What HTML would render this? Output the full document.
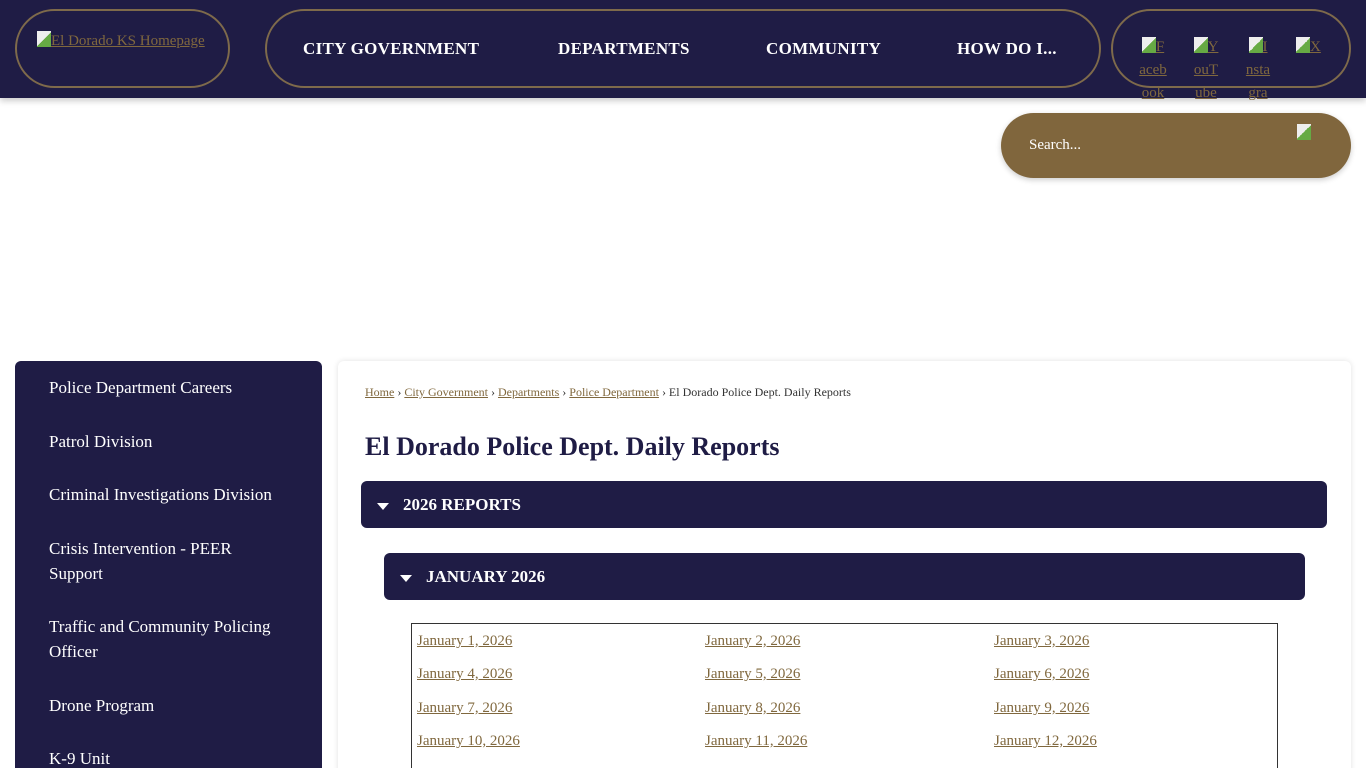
<!DOCTYPE html>
<html><head><meta charset="utf-8"><style>
html,body{margin:0;width:1366px;height:768px;overflow:hidden}
body{background:#fff;position:relative}
*{font-family:"Liberation Serif","DejaVu Serif",serif}
.hdr{position:absolute;left:0;top:0;width:1366px;height:98px;background:#1f1c45;box-shadow:0 3px 6px rgba(0,0,0,.2)}
.pill{position:absolute;border:2px solid #7e6a4b;border-radius:40px;box-sizing:border-box}
a{color:#80683e;text-decoration:underline}
.nav{color:#fff;font-weight:bold;font-size:17px;position:absolute;top:39px;letter-spacing:.3px}
.soc{position:absolute;top:36px;font-size:15px;color:#80683e;text-decoration:underline;width:30px;line-height:23px;word-break:break-all;text-align:center}
.search{position:absolute;left:1001px;top:113px;width:350px;height:65px;background:#80663d;border-radius:33px;box-shadow:0 2px 6px rgba(0,0,0,.2)}
.side{position:absolute;left:15px;top:361px;width:307px;height:420px;background:#1f1c45;border-radius:6px}
.side div{position:absolute;left:34px;color:#fff;font-size:17px;line-height:25px;width:240px}
.main{position:absolute;left:338px;top:361px;width:1013px;height:420px;background:#fff;border-radius:6px;box-shadow:0 0 6px rgba(0,0,0,.12)}
.bar{position:absolute;background:#1f1c45;border-radius:6px;color:#fff;font-weight:bold;font-size:17px}
.tri{display:inline-block;width:0;height:0;border-left:6px solid transparent;border-right:6px solid transparent;border-top:7px solid #fff;margin-right:14px;vertical-align:middle}
.cal{position:absolute;left:411px;top:623px;width:867px;height:160px;border:1px solid #333;box-sizing:border-box}
.cal a{position:absolute;font-size:15px}
.ic{display:inline-block;width:14px;height:16px;background:linear-gradient(135deg,#eee 50%,#6a4 50%);vertical-align:-2px}
</style></head><body>
<div class="hdr">
<div class="pill" style="left:15px;top:9px;width:215px;height:79px"></div>
<a style="position:absolute;left:37px;top:31px;font-size:15px"><span class="ic"></span>El Dorado KS Homepage</a>
<div class="pill" style="left:265px;top:9px;width:836px;height:79px"></div>
<span class="nav" style="left:303px">CITY GOVERNMENT</span>
<span class="nav" style="left:558px">DEPARTMENTS</span>
<span class="nav" style="left:766px">COMMUNITY</span>
<span class="nav" style="left:957px">HOW DO I...</span>
<div class="pill" style="left:1111px;top:9px;width:240px;height:79px"></div>
<span class="soc" style="left:1138px"><span class="ic"></span>F aceb ook</span>
<span class="soc" style="left:1191px"><span class="ic"></span>Y ouT ube</span>
<span class="soc" style="left:1243px"><span class="ic"></span>I nsta gra</span>
<span class="soc" style="left:1296px;width:auto"><span class="ic"></span>X</span>
</div>
<div class="search"><span style="position:absolute;left:28px;top:24px;color:#fff;font-size:15px">Search...</span><span class="ic" style="position:absolute;left:296px;top:11px"></span></div>
<div class="side">
<div style="top:14px">Police Department Careers</div>
<div style="top:68px">Patrol Division</div>
<div style="top:121px">Criminal Investigations Division</div>
<div style="top:175px">Crisis Intervention - PEER Support</div>
<div style="top:253px">Traffic and Community Policing Officer</div>
<div style="top:332px">Drone Program</div>
<div style="top:385px">K-9 Unit</div>
</div>
<div class="main"></div>
<div style="position:absolute;left:365px;top:385px;font-size:12px;color:#333"><a>Home</a> › <a>City Government</a> › <a>Departments</a> › <a>Police Department</a> › El Dorado Police Dept. Daily Reports</div>
<div style="position:absolute;left:365px;top:432px;font-size:26px;font-weight:bold;color:#1f1c45">El Dorado Police Dept. Daily Reports</div>
<div class="bar" style="left:361px;top:481px;width:966px;height:47px;line-height:47px;padding-left:16px;box-sizing:border-box"><span class="tri"></span>2026 REPORTS</div>
<div class="bar" style="left:384px;top:553px;width:921px;height:47px;line-height:47px;padding-left:16px;box-sizing:border-box"><span class="tri"></span>JANUARY 2026</div>
<div class="cal">
<a style="left:5px;top:9px">January 1, 2026</a><a style="left:293px;top:9px">January 2, 2026</a><a style="left:582px;top:9px">January 3, 2026</a>
<a style="left:5px;top:42px">January 4, 2026</a><a style="left:293px;top:42px">January 5, 2026</a><a style="left:582px;top:42px">January 6, 2026</a>
<a style="left:5px;top:76px">January 7, 2026</a><a style="left:293px;top:76px">January 8, 2026</a><a style="left:582px;top:76px">January 9, 2026</a>
<a style="left:5px;top:109px">January 10, 2026</a><a style="left:293px;top:109px">January 11, 2026</a><a style="left:582px;top:109px">January 12, 2026</a>
</div>
</body></html>
